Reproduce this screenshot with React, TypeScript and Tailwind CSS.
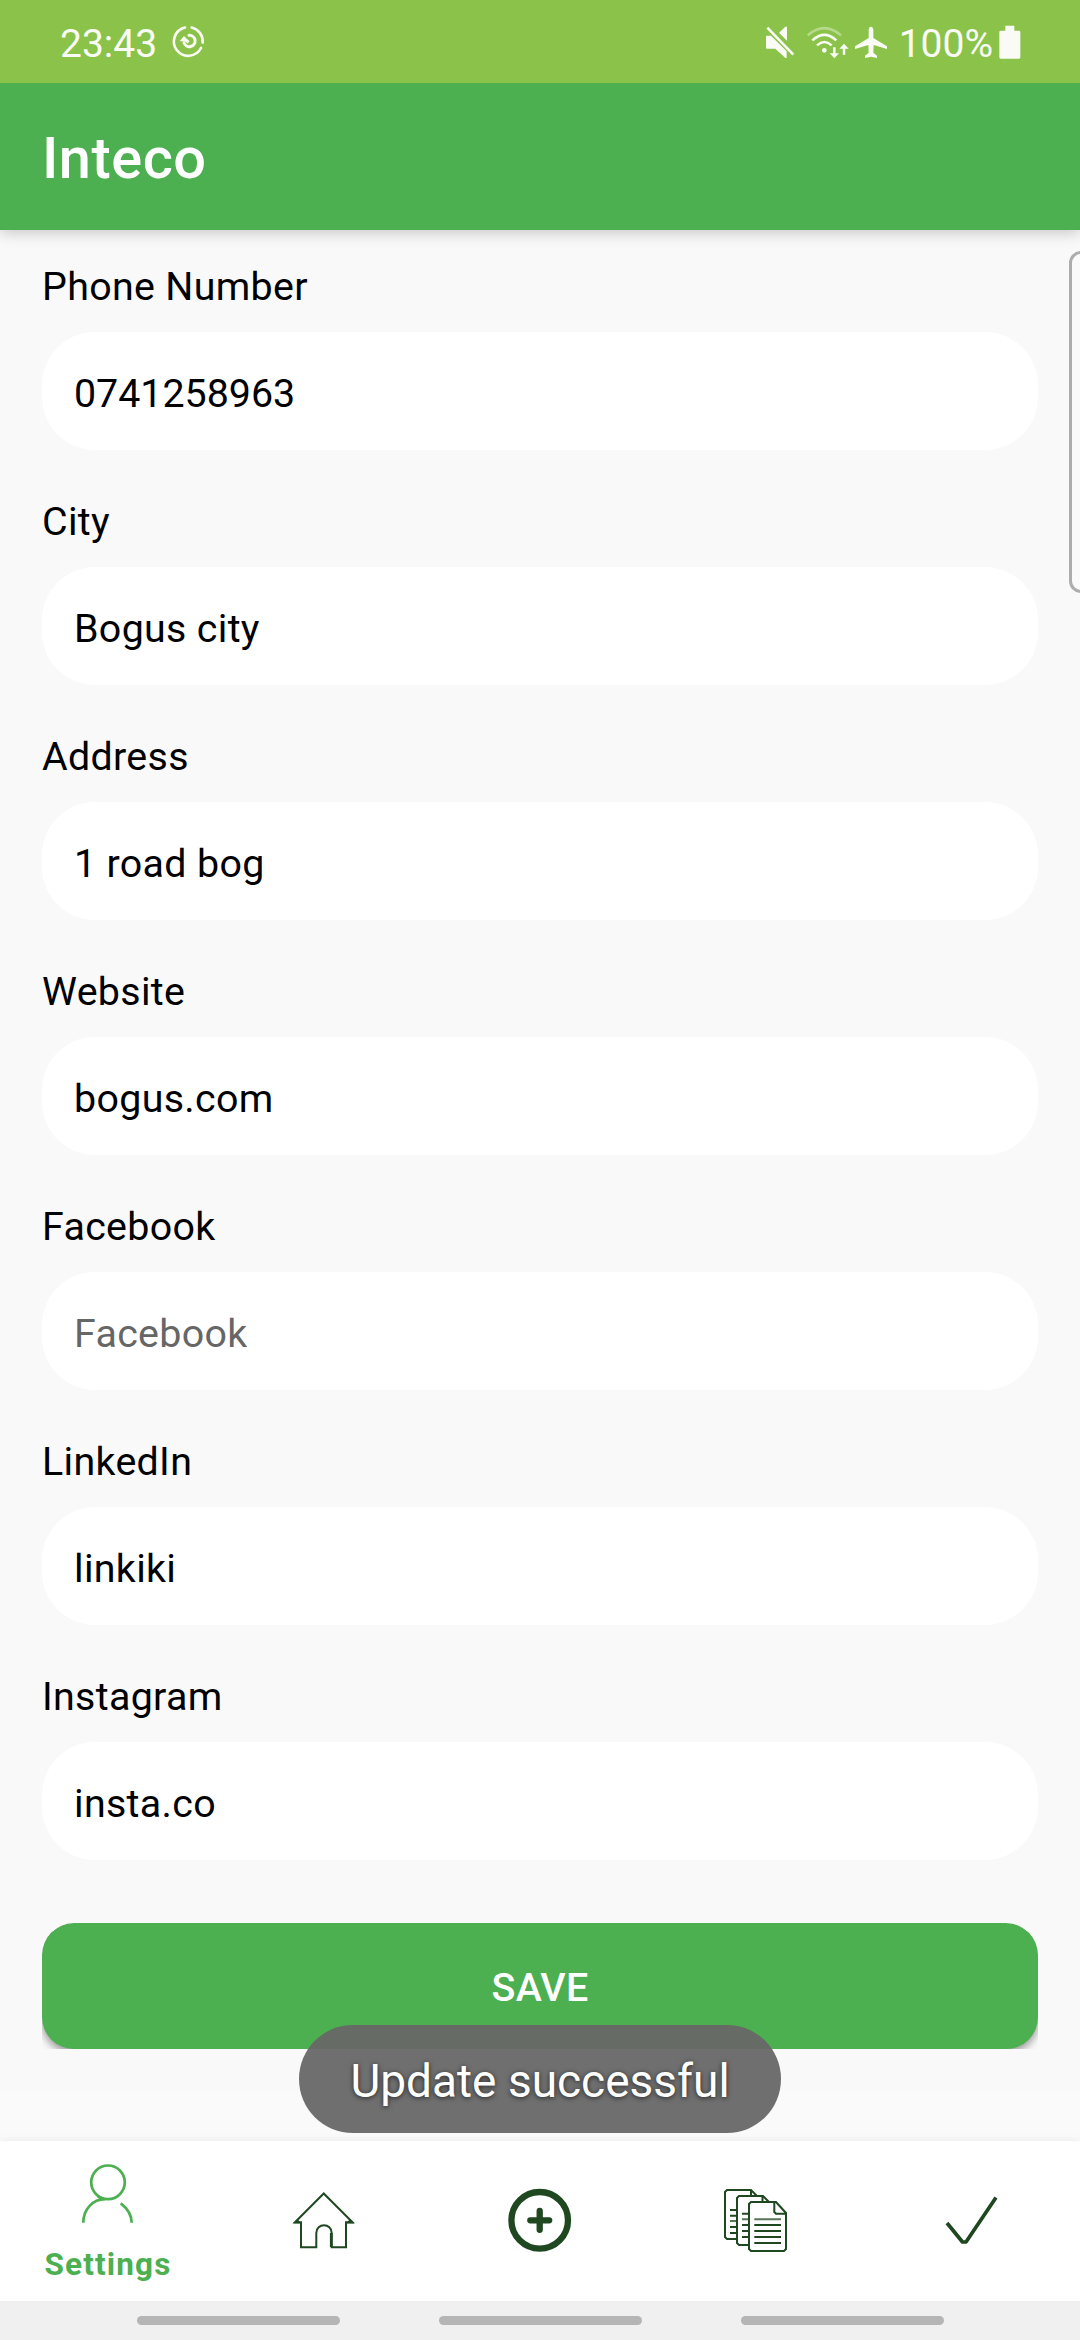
import React from "react";

const fields = [
  { label: "Phone Number", value: "0741258963", numeric: true },
  { label: "City", value: "Bogus city" },
  { label: "Address", value: "1 road bog" },
  { label: "Website", value: "bogus.com" },
  { label: "Facebook", value: "" },
  { label: "LinkedIn", value: "linkiki" },
  { label: "Instagram", value: "insta.co" },
];

function SyncIcon() {
  return (
    <svg className="ml-[13px] h-9 w-9" viewBox="510 72 108 108" fill="none" stroke="#f9fbf4" strokeWidth="8">
      <path d="M555 82.500A43 43 0 1 0 603 144" strokeLinecap="round" />
      <path d="M575 82.500A43 43 0 0 1 608 128" strokeLinecap="round" />
      <path d="M567 106A17 17 0 1 1 552 128" strokeWidth="9" strokeLinecap="round" />
      <path d="M539 124L552 108L568 124Z" fill="#f9fbf4" stroke="none" />
      <path d="M553 118L566 127" strokeWidth="8" />
    </svg>
  );
}

function MuteIcon() {
  return (
    <svg className="h-[34px] w-[32px]" viewBox="72 72 96 102" fill="#f9fbf4">
      <path d="M81 104H93L140 151V171H136L106 143H81Q78 143 78 140V107Q78 104 81 104Z" />
      <path d="M136 77H141V119L117 95Z" />
      <path d="M82 80L160 161" stroke="#f9fbf4" strokeWidth="8" />
    </svg>
  );
}

function WifiIcon() {
  return (
    <svg className="ml-[9px] h-[34px] w-[44px]" viewBox="195 72 132 102" fill="none" stroke="#f9fbf4" strokeWidth="7.500">
      <path d="M203 103Q253 60 303 103" opacity="0.4" />
      <path d="M217 118Q253 85 289 118" />
      <path d="M231 133Q253 113 275 133" />
      <circle cx="253" cy="148" r="7" fill="#f9fbf4" stroke="none" />
      <path d="M283 139V165M312 161V135" />
      <path d="M269 157H297L283 172ZM298 143H326L312 128Z" fill="#f9fbf4" stroke="none" />
    </svg>
  );
}

function PlaneIcon() {
  return (
    <svg className="ml-[5px] h-[34px] w-[34px]" viewBox="342 72 102 102" fill="#f9fbf4">
      <path d="M393 77C398 77 400 83 400 88V111L441 136V144L401 132L400 155L411 164V171L393 167L375 171V164L386 155L385 132L345 144V136L386 111V88C386 83 388 77 393 77Z" />
    </svg>
  );
}

function BatteryIcon() {
  return (
    <svg className="ml-[6px] h-[34px] w-[22px]" viewBox="776 73 66 102" fill="#f9fbf4">
      <path d="M795 75H822V90H836Q840 90 840 94V170Q840 174 836 174H781Q777 174 777 170V94Q777 90 781 90H795Z" />
    </svg>
  );
}

function PersonIcon() {
  return (
    <svg className="h-16 w-16" viewBox="0 0 64 64" fill="none" stroke="#4caf50" strokeWidth="2.700">
      <circle cx="32" cy="22.300" r="16.800" />
      <path d="M7.300 62.800C7.300 49 17 39.300 29 39.200M22 36.500L28 39.500M44.700 43.300C51 48 55.500 54 55.700 62.800" />
    </svg>
  );
}

function HomeIcon() {
  return (
    <svg className="h-16 w-16" viewBox="0 0 64 64" fill="none" stroke="#1f4720" strokeWidth="2">
      <path d="M31.700 5.500L3 34.200H9V59.200H24.300V45C24.300 34.800 39.700 34.800 39.700 45V59.200H54V34.200H60.500Z" />
      <path d="M1 35.500L6 31.500L9 35.500ZM62.500 35.500L57.500 31.500L54 35.500Z" fill="#1f4720" stroke="none" />
      <path d="M39.200 45V59" strokeWidth="2.600" />
    </svg>
  );
}

function AddIcon() {
  return (
    <svg className="h-16 w-16" viewBox="0 0 64 64" fill="none" stroke="#1f4720" strokeWidth="6.300" strokeLinecap="round">
      <circle cx="31.700" cy="32.300" r="28.300" />
      <path d="M22.300 32.300H41.200M31.700 22.900V41.800" />
    </svg>
  );
}

function DocumentsIcon() {
  return (
    <svg className="h-16 w-16" viewBox="0 0 64 64" fill="none" stroke="#1f4720" strokeWidth="2">
      <path d="M13 51H3L1 49V4L3 2H27L33 8M27 2V8" />
      <path d="M25 57H15L13 55V10L15 8H39L45 14M38.500 8V14" />
      <path d="M27 14H52L62 25V61L60 63H27L25 61V16ZM50.300 14V24L52 25.700H62" />
      <path d="M6 22H12M6 27.700H12M6 39H12M6 45H12M18 25.700H24M18 37H24M18 43H24M18 49H24M30.300 37H57M30.300 43H57M30.300 49H57M30.300 55H57" />
      <path d="M6 33H12M18 31.300H24M30.300 31.300H57" opacity="0.750" />
    </svg>
  );
}

function CheckIcon() {
  return (
    <svg className="h-16 w-16" viewBox="0 0 64 64" fill="none" stroke="#1f4720" strokeWidth="3.700">
      <path d="M7 35L22.500 54H26L56 9.500" strokeLinejoin="round" />
    </svg>
  );
}

export default function App() {
  return (
    <div className="relative flex h-[2340px] w-[1080px] flex-col overflow-hidden bg-[#f9f9f9] font-['Roboto',sans-serif] text-[39.375px] text-black">
      <div className="relative z-20 flex h-[83px] shrink-0 items-center bg-[#8bc34a] pl-[60px] pr-[59px] text-[39px] text-[#f9fbf4]">
        <span className="pt-[5px]">23:43</span>
        <SyncIcon />
        <div className="ml-auto flex items-center">
          <MuteIcon />
          <WifiIcon />
          <PlaneIcon />
          <span className="ml-[11px] pt-[5px]">100%</span>
          <BatteryIcon />
        </div>
      </div>

      <header className="z-10 flex h-[147px] shrink-0 items-center bg-[#4caf50] pl-[42px] pt-[4px] shadow-[0_3px_14px_rgba(0,0,0,0.2)]">
        <h1 className="text-[57.75px] font-medium tracking-[0.5px] text-white">Inteco</h1>
      </header>

      <main className="flex h-[1861px] flex-col px-[42px] pt-[34px]">
        {fields.map((field) => (
          <label key={field.label} className="mb-[49px] block">
            <span className="mb-[22px] block h-[46px] leading-[46px] tracking-[0.33px]">{field.label}</span>
            <input
              className={
                "block h-[118px] w-full rounded-[53px] bg-white px-[32px] pt-[5px] text-black outline-none placeholder:text-[#666666] placeholder:opacity-100 " +
                (field.numeric ? "tracking-normal" : "tracking-[0.33px]")
              }
              defaultValue={field.value}
              placeholder={field.label}
            />
          </label>
        ))}
        <div className="mt-[14px] h-[126px] overflow-hidden rounded-t-[32px]">
          <button className="h-full w-full rounded-[32px] bg-[#4caf50] pt-1 font-medium tracking-[0.2px] text-white shadow-[0_4px_8px_rgba(0,0,0,0.4)]">
            SAVE
          </button>
        </div>
      </main>
      <div className="h-[50px] bg-[#fafafa]" />

      <nav className="z-10 grid h-[160px] shrink-0 grid-cols-5 bg-white shadow-[0_0_8px_rgba(0,0,0,0.08)]">
        <div className="flex flex-col items-center pt-[19px] text-[31.5px] font-bold text-[#4caf50]">
          <PersonIcon />
          <span className="mt-[22px] leading-[38px] tracking-[1.15px]">Settings</span>
        </div>
        <div className="flex justify-center pt-[47px]"><HomeIcon /></div>
        <div className="flex justify-center pt-[47px]"><AddIcon /></div>
        <div className="flex justify-center pt-[47px]"><DocumentsIcon /></div>
        <div className="flex justify-center pt-[47px]"><CheckIcon /></div>
      </nav>

      <div className="z-10 flex h-[39px] shrink-0 justify-center gap-[99px] bg-[#f0f0f0] pt-[15px]">
        <div className="h-[9px] w-[203px] rounded-full bg-[#b5b5b5]" />
        <div className="h-[9px] w-[203px] rounded-full bg-[#b5b5b5]" />
        <div className="h-[9px] w-[203px] rounded-full bg-[#b5b5b5]" />
      </div>

      <div className="absolute -right-4 top-[251px] h-[342px] w-[27px] rounded-[12px] border-[3px] border-[#adadad] bg-[#fafafa]" />

      <div className="absolute left-[299px] top-[2025px] z-20 flex h-[108px] w-[482px] items-center justify-center rounded-full bg-[#676767]/95 pt-1 text-[46px] text-white [text-shadow:0_1px_5px_rgba(0,0,0,0.7)]">
        Update successful
      </div>
    </div>
  );
}
